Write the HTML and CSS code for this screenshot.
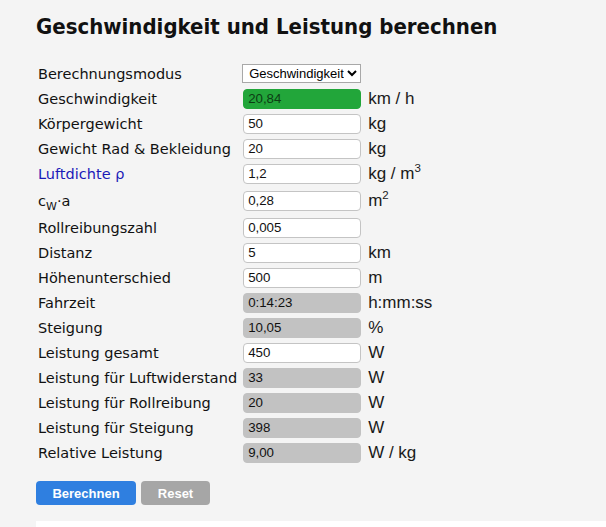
FILE: index.html
```html
<!DOCTYPE html>
<html lang="de">
  <head>
    <meta charset="UTF-8" />
    <meta name="viewport" content="width=device-width, initial-scale=1.0" />
    <title>Geschwindigkeit und Leistung</title>
    <link rel="stylesheet" href="styles.css">
  </head>
  <body>
    <div class="container">
      <h1>Geschwindigkeit und Leistung berechnen</h1>
      <table class="calc">
        <tr>
          <td>Berechnungsmodus</td>
          <td>
            <select class="mode">
              <option>Geschwindigkeit</option>
              <option>Leistung</option>
            </select>
          </td>
          <td></td>
        </tr>
        <tr>
          <td>Geschwindigkeit</td>
          <td><input class="result" type="text" value="20,84" readonly /></td>
          <td class="unit">km / h</td>
        </tr>
        <tr>
          <td>Körpergewicht</td>
          <td><input type="text" value="50" /></td>
          <td class="unit">kg</td>
        </tr>
        <tr>
          <td>Gewicht Rad &amp; Bekleidung</td>
          <td><input type="text" value="20" /></td>
          <td class="unit">kg</td>
        </tr>
        <tr>
          <td class="link">Luftdichte ρ</td>
          <td><input type="text" value="1,2" /></td>
          <td class="unit">kg / m<sup>3</sup></td>
        </tr>
        <tr class="tall">
          <td>c<sub>W</sub>·a</td>
          <td><input type="text" value="0,28" /></td>
          <td class="unit">m<sup>2</sup></td>
        </tr>
        <tr>
          <td>Rollreibungszahl</td>
          <td><input type="text" value="0,005" /></td>
          <td class="unit"></td>
        </tr>
        <tr>
          <td>Distanz</td>
          <td><input type="text" value="5" /></td>
          <td class="unit">km</td>
        </tr>
        <tr>
          <td>Höhenunterschied</td>
          <td><input type="text" value="500" /></td>
          <td class="unit">m</td>
        </tr>
        <tr>
          <td>Fahrzeit</td>
          <td><input class="out" type="text" value="0:14:23" readonly /></td>
          <td class="unit">h:mm:ss</td>
        </tr>
        <tr>
          <td>Steigung</td>
          <td><input class="out" type="text" value="10,05" readonly /></td>
          <td class="unit">%</td>
        </tr>
        <tr>
          <td>Leistung gesamt</td>
          <td><input type="text" value="450" /></td>
          <td class="unit">W</td>
        </tr>
        <tr>
          <td>Leistung für Luftwiderstand</td>
          <td><input class="out" type="text" value="33" readonly /></td>
          <td class="unit">W</td>
        </tr>
        <tr>
          <td>Leistung für Rollreibung</td>
          <td><input class="out" type="text" value="20" readonly /></td>
          <td class="unit">W</td>
        </tr>
        <tr>
          <td>Leistung für Steigung</td>
          <td><input class="out" type="text" value="398" readonly /></td>
          <td class="unit">W</td>
        </tr>
        <tr>
          <td>Relative Leistung</td>
          <td><input class="out" type="text" value="9,00" readonly /></td>
          <td class="unit">W / kg</td>
        </tr>
      </table>
      <div class="buttons">
        <button class="btn btn-calc">Berechnen</button>
        <button class="btn btn-reset">Reset</button>
      </div>
      <div class="panel"></div>
    </div>
  </body>
</html>
```

FILE: styles.css
```css
body {
  margin: 0;
  background-color: #f4f4f4;
  font-family: "DejaVu Sans", sans-serif;
  color: #111;
}
.container {
  padding: 12px 0 0 36px;
}
h1 {
  margin: 0 0 19px 0;
  font-family: "DejaVu Sans Condensed", "DejaVu Sans", sans-serif;
  font-size: 22px;
  font-weight: bold;
  line-height: 30px;
}
.calc {
  border-collapse: collapse;
  font-size: 14.5px;
}
.calc td {
  padding: 0;
  height: 25px;
  white-space: nowrap;
}
.calc td:first-child {
  padding-left: 2px;
  padding-right: 6px;
}
.calc tr.tall td {
  height: 29px;
}
.link {
  color: #1a1ab8;
}
sub {
  font-size: 11px;
  line-height: 0;
}
input {
  box-sizing: border-box;
  width: 118px;
  height: 20px;
  margin: 0;
  padding: 0 4px;
  border: 1px solid #c4c4c4;
  border-radius: 4px;
  background: #fff;
  font-family: "Liberation Sans", Arial, sans-serif;
  font-size: 13.3px;
  color: #111;
}
input.out {
  background: #c2c2c2;
  border-color: #c2c2c2;
}
input.result {
  background: #22a63a;
  border-color: #22a63a;
  color: #0c3d14;
}
.mode {
  box-sizing: border-box;
  width: 119px;
  height: 19px;
  margin: 0 0 0 -1px;
  padding: 0 0 0 2px;
  border: 1px solid #a8a8a8;
  border-radius: 0;
  background: #fff;
  font-family: "Liberation Sans", Arial, sans-serif;
  font-size: 13px;
}
.unit {
  padding-left: 7px !important;
  font-family: "Liberation Sans", Arial, sans-serif;
  font-size: 17px;
  color: #1a1a1a;
}
.unit sup {
  font-size: 11.5px;
  line-height: 0;
}
.buttons {
  margin-top: 16px;
  display: flex;
  gap: 5px;
}
.btn {
  height: 24px;
  border: none;
  border-radius: 4px;
  color: #fff;
  font-family: "Liberation Sans", Arial, sans-serif;
  font-weight: bold;
  font-size: 13px;
  padding: 0 15px;
}
.btn-calc {
  background: #2f7fe0;
  width: 100px;
}
.btn-reset {
  background: #a6a6a6;
  width: 69px;
}
.panel {
  margin-top: 16px;
  height: 40px;
  background: #fff;
}
```
